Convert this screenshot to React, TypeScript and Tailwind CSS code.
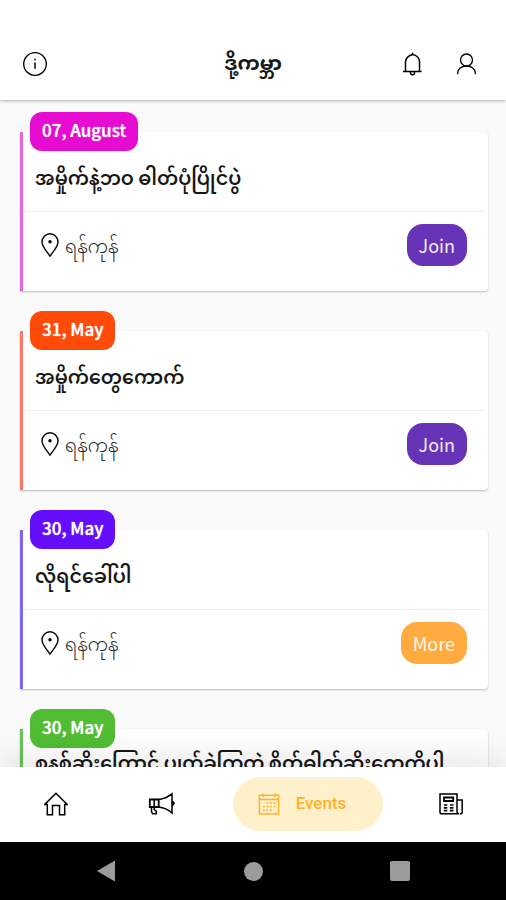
import type { ReactNode } from "react";
import clsx from "clsx";

type EventItem = {
  date: string;
  title: string;
  place: string;
  action: "Join" | "More";
  badge: string;
  edge: string;
  tall?: boolean;
};

const events: EventItem[] = [
  {
    date: "07, August",
    title: "အမှိုက်နဲ့ဘဝ ဓါတ်ပုံပြိုင်ပွဲ",
    place: "ရန်ကုန်",
    action: "Join",
    badge: "bg-[#e60bd0]",
    edge: "border-[#e667d6]",
  },
  {
    date: "31, May",
    title: "အမှိုက်တွေကောက်",
    place: "ရန်ကုန်",
    action: "Join",
    badge: "bg-[#ff4a08]",
    edge: "border-[#fb776a]",
  },
  {
    date: "30, May",
    title: "လိုရင်ခေါ်ပါ",
    place: "ရန်ကုန်",
    action: "More",
    badge: "bg-[#640dff]",
    edge: "border-[#7f66ee]",
  },
  {
    date: "30, May",
    title: "စနစ်ဆိုးကြောင့် ပျက်ခဲ့ကြတဲ့ စိတ်ဓါတ်ဆိုးတွေကိုပါ",
    place: "ရန်ကုန်",
    action: "More",
    badge: "bg-[#50bd33]",
    edge: "border-[#68c45e]",
    tall: true,
  },
];

function Icon({ children, className }: { children: ReactNode; className?: string }) {
  return (
    <svg
      viewBox="0 0 24 24"
      fill="none"
      stroke="currentColor"
      strokeWidth="1.5"
      className={clsx("h-6 shrink-0", className ?? "w-6")}
      aria-hidden="true"
    >
      {children}
    </svg>
  );
}

function InfoIcon() {
  return (
    <Icon>
      <circle cx="12" cy="12" r="11.3" strokeWidth="1.3" />
      <path d="M12 10.5v6.3M12 6.8v1.8" />
    </Icon>
  );
}

function BellIcon() {
  return (
    <Icon>
      <path d="M4.500 19.3V9.6C4.500 6.2 8 3.4 11.500 2.6c4 .8 7 3.6 7 7v9.7M11.500 .7v2M2 19.400h18.600" />
      <path d="M9.500 19.6v1.2a2 2 0 0 0 4 0v-1.2" strokeWidth="1.5" />
    </Icon>
  );
}

function UserIcon() {
  return (
    <Icon>
      <circle cx="11.5" cy="8" r="6" strokeWidth="1.3" />
      <path d="M2.700 22.300v-1.500c0-4 3.800-6.800 8.800-6.800s8.800 2.800 8.800 6.800v1.500" strokeWidth="1.3" />
    </Icon>
  );
}

function PinIcon() {
  return (
    <Icon>
      <path d="M12 23.2C8.7 18 4 14.2 4 8.8a8 8 0 0 1 16 0c0 5.4-4.7 9.2-8 14.400z" strokeWidth="1.4" />
      <circle cx="12" cy="8.8" r="1.7" fill="currentColor" stroke="none" />
    </Icon>
  );
}

function HomeIcon() {
  return (
    <Icon>
      <path d="M.8 12.4 12 1.2l11.200 11.200h-2.500v10.300h-5.200v-9.200H8.500v9.200H3.300V12.400z" />
    </Icon>
  );
}

function MegaphoneIcon() {
  return (
    <Icon className="w-7">
      <path d="M-.2 7.500h8.900v7.500H-.2z" strokeWidth="1.8" />
      <path d="M4.200 7.500v7.500M8.700 7.500C14 6.800 18.500 4.500 22 1.800v19.200C18.500 18 14 15.600 8.700 15M1.500 15v4.500l1 2.200h3.700v-2.700L4.200 17.500V15" />
      <path d="M22.300 9.300c2.600 0 2.600 4.200 0 4.200z" fill="currentColor" strokeWidth="1" />
    </Icon>
  );
}

function CalendarIcon() {
  return (
    <Icon>
      <path d="M2.400 3.200h19.200v18.800H2.400zM2.400 7.500h19.200M6.200 1.500v3.500M17.800 1.500v3.500" />
      <path
        d="M9.500 11h2M13 11h2M16.500 11h2M6 14.500h2M9.500 14.500h2M13 14.500h2M16.500 14.500h2M6 18h2M9.500 18h2M13 18h2"
        strokeWidth="1.6"
      />
    </Icon>
  );
}

function NewsIcon() {
  return (
    <Icon>
      <path d="M1 2h17v17.500c0 1.500 1 2.300 2.200 2.300H2.500C1.600 21.800 1 21.200 1 20.300zM18 8h5.200v12c0 1.200-1 1.800-2.200 1.800" />
      <path d="M5 5.500h9.200v3.500H5z" strokeWidth="1.8" />
      <path d="M4.800 13h3.500M11 13h3.500M4.800 15.800h3.500M11 15.800h3.500M4.800 18.600h3.500M11 18.600h3.500" strokeWidth="1.7" />
    </Icon>
  );
}

function EventCard({ event }: { event: EventItem }) {
  return (
    <article
      className={clsx(
        "relative h-[159px] shrink-0 rounded-r border-l-[3px] bg-white shadow-[0_1px_2px_rgba(0,0,0,0.25)]",
        event.edge
      )}
    >
      <time
        className={clsx(
          "absolute -top-5 left-[7px] flex h-[39px] items-center rounded-xl px-3 pb-1 text-[17px] font-medium text-white [text-shadow:0_0_1px_#fff]",
          event.badge
        )}
      >
        {event.date}
      </time>
      <h2 className="mr-1 flex h-20 items-center border-b border-gray-200/70 px-3 pt-2.5 text-[19px] leading-6 font-semibold whitespace-nowrap text-neutral-900">
        <span className={clsx(event.tall && "h-12")}>{event.title}</span>
      </h2>
      <div className="flex items-center justify-between py-3 pr-[21px] pl-[15px]">
        <p className="flex items-center gap-[3px] text-[18px] leading-6 font-light text-neutral-800">
          <span className="text-black">
            <PinIcon />
          </span>
          {event.place}
        </p>
        <button
          type="button"
          className={clsx(
            "flex h-[42px] items-center rounded-2xl px-3 text-[18px] text-white/90",
            event.action === "Join" ? "bg-[#6734b8]" : "bg-[#ffab40]"
          )}
        >
          {event.action}
        </button>
      </div>
    </article>
  );
}

export default function App() {
  return (
    <div className="flex h-screen flex-col bg-[#fafafa] font-['Noto_Sans_CJK_SC','Noto_Sans_Myanmar','Noto_Sans',sans-serif] text-black">
      {/* App bar */}
      <header className="relative z-10 grid h-[100px] shrink-0 grid-cols-3 items-center bg-white px-[23px] pt-7 shadow-[0_1px_3px_rgba(0,0,0,0.3)]">
        <button type="button" aria-label="Info" className="justify-self-start">
          <InfoIcon />
        </button>
        <h1 className="pb-1 text-center text-[20px] font-bold whitespace-nowrap text-neutral-900">ဒို့ကမ္ဘာ</h1>
        <div className="flex justify-end gap-[30px] pr-1">
          <button type="button" aria-label="Notifications">
            <BellIcon />
          </button>
          <button type="button" aria-label="Profile">
            <UserIcon />
          </button>
        </div>
      </header>

      {/* Event list */}
      <main className="flex min-h-0 flex-1 flex-col gap-10 overflow-y-auto pt-8 pr-[18px] pl-5 [scrollbar-width:none]">
        {events.map((event) => (
          <EventCard key={event.title} event={event} />
        ))}
      </main>

      {/* Bottom tabs */}
      <nav className="relative flex h-[75px] shrink-0 items-center justify-between bg-white pr-[43px] pb-0.5 pl-11 shadow-[0_-8px_36px_rgba(0,0,0,0.1)]">
        <button type="button" aria-label="Home">
          <HomeIcon />
        </button>
        <button type="button" aria-label="News feed" className="ml-6">
          <MegaphoneIcon />
        </button>
        <button
          type="button"
          className="flex h-[54px] w-[150px] items-center gap-[15px] rounded-full bg-[#fff0cc] px-6 font-['Roboto',sans-serif] text-[17px] font-medium text-[#ffb128]"
        >
          <CalendarIcon />
          Events
        </button>
        <button type="button" aria-label="Articles">
          <NewsIcon />
        </button>
      </nav>

      {/* System navigation */}
      <footer className="relative flex h-[58px] shrink-0 items-center justify-between bg-black px-24 text-[#9b9b9b]">
        <button type="button" aria-label="Back">
          <svg viewBox="0 0 20 22" className="h-[22px] w-5" fill="currentColor">
            <path d="M1 11 19 .6v20.800z" />
          </svg>
        </button>
        <button type="button" aria-label="Home screen" className="size-[19px] rounded-full bg-current" />
        <button type="button" aria-label="Recent apps" className="size-5 rounded-xs bg-current" />
      </footer>
    </div>
  );
}
